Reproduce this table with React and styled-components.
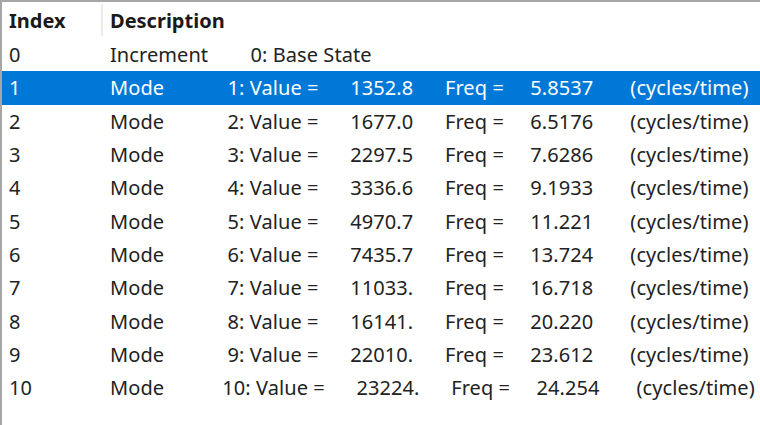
import React from "react";
import styled, { createGlobalStyle } from "styled-components";

const GlobalStyle = createGlobalStyle`
  html, body {
    margin: 0;
    padding: 0;
    background: #ffffff;
  }
  body {
    font-family: "Noto Sans", "Open Sans", sans-serif;
    color: #1e1e1e;
  }
`;

const Frame = styled.div`
  width: 760px;
  height: 425px;
  box-sizing: border-box;
  border-top: 2px solid #a6a6a6;
  border-left: 2px solid #a6a6a6;
  background: #ffffff;
  overflow: hidden;
`;

const HeaderRow = styled.div`
  display: grid;
  grid-template-columns: 101px 1fr;
  height: 36px;
  align-items: center;
`;

const HeaderCell = styled.div`
  height: 32px;
  display: flex;
  align-items: center;
  padding-left: 7px;
  font-size: 20px;
  font-weight: 700;
  color: #1a1a1a;
  border-right: ${(props) => (props.$divider ? "2px solid #ebebeb" : "none")};
`;

const Row = styled.div`
  display: grid;
  grid-template-columns: 101px 1fr;
  height: 33.3px;
  align-items: center;
  font-size: 20px;
  background: ${(props) => (props.$selected ? "#0078d7" : "transparent")};
  color: ${(props) => (props.$selected ? "#ffffff" : "#222222")};
`;

const IndexCell = styled.div`
  padding-left: 7px;
  white-space: pre;
`;

const DescCell = styled.div`
  padding-left: 7px;
  white-space: pre;
  letter-spacing: 0.08px;
`;

const sp = (n) => " ".repeat(n);

const modes = [
  ["1352.8", "5.8537"],
  ["1677.0", "6.5176"],
  ["2297.5", "7.6286"],
  ["3336.6", "9.1933"],
  ["4970.7", "11.221"],
  ["7435.7", "13.724"],
  ["11033.", "16.718"],
  ["16141.", "20.220"],
  ["22010.", "23.612"],
  ["23224.", "24.254"],
];

const rows = [
  { index: 0, text: "Increment" + sp(8) + "0: Base State" },
  ...modes.map(([value, freq], i) => ({
    index: i + 1,
    text:
      "Mode" +
      sp(11) +
      String(i + 1).padStart(2, " ") +
      ": Value =" +
      sp(6) +
      value +
      sp(6) +
      "Freq =" +
      sp(5) +
      freq +
      sp(7) +
      "(cycles/time)",
  })),
];

const App = () => {
  return (
    <>
      <GlobalStyle />
      <Frame>
        <HeaderRow>
          <HeaderCell $divider>Index</HeaderCell>
          <HeaderCell>Description</HeaderCell>
        </HeaderRow>
        {rows.map((row) => (
          <Row key={row.index} $selected={row.index === 1}>
            <IndexCell>{row.index}</IndexCell>
            <DescCell>{row.text}</DescCell>
          </Row>
        ))}
      </Frame>
    </>
  );
};

export default App;
